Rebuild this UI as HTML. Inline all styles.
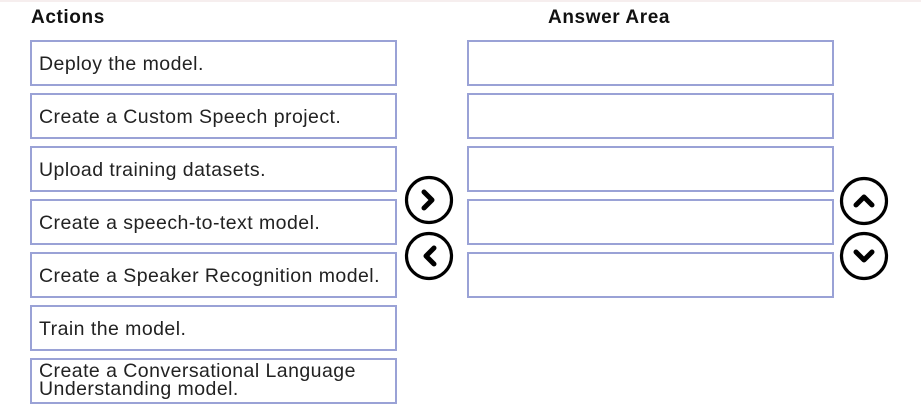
<!DOCTYPE html>
<html><head><meta charset="utf-8"><style>
body{margin:0;width:921px;height:414px;background:#fff;position:relative;overflow:hidden;font-family:"Liberation Sans",sans-serif;}
.top{position:absolute;left:0;top:0;width:921px;height:2px;background:#f6eeee}
.h{position:absolute;top:7px;font-weight:bold;font-size:19px;letter-spacing:0.6px;color:#111}
.b{position:absolute;box-sizing:border-box;width:367px;height:46px;border:2px solid #9aa2d6;background:#fff;font-size:19.5px;letter-spacing:0.45px;color:#222;padding-left:7px;line-height:44px;white-space:nowrap}
.r{left:467px}
.l{left:30px}
.two{line-height:18px;padding-top:2px}
svg{position:absolute}
</style></head><body>
<div class="top"></div>
<div class="h" style="left:31px">Actions</div>
<div class="h" style="left:548px">Answer Area</div>
<div class="b l" style="top:40px">Deploy the model.</div>
<div class="b l" style="top:93px">Create a Custom Speech project.</div>
<div class="b l" style="top:146px">Upload training datasets.</div>
<div class="b l" style="top:199px">Create a speech-to-text model.</div>
<div class="b l" style="top:252px">Create a Speaker Recognition model.</div>
<div class="b l" style="top:305px">Train the model.</div>
<div class="b l two" style="top:358px">Create a Conversational Language<br>Understanding model.</div>
<div class="b r" style="top:40px"></div>
<div class="b r" style="top:93px"></div>
<div class="b r" style="top:146px"></div>
<div class="b r" style="top:199px"></div>
<div class="b r" style="top:252px"></div>
<svg width="921" height="414" style="left:0;top:0">
<g fill="none" stroke="#000" stroke-width="3.2" stroke-linecap="round" stroke-linejoin="round">
<circle cx="429" cy="200" r="22.5"/>
<circle cx="429" cy="256" r="22.5"/>
<circle cx="864" cy="201" r="22.5"/>
<circle cx="864" cy="256" r="22.5"/>
<path d="M424 192 L432 200 L424 208" stroke-width="5"/>
<path d="M434 248 L426 256 L434 264" stroke-width="5"/>
<path d="M856 205 L864 197 L872 205" stroke-width="5"/>
<path d="M856 252 L864 260 L872 252" stroke-width="5"/>
</g></svg>
</body></html>
